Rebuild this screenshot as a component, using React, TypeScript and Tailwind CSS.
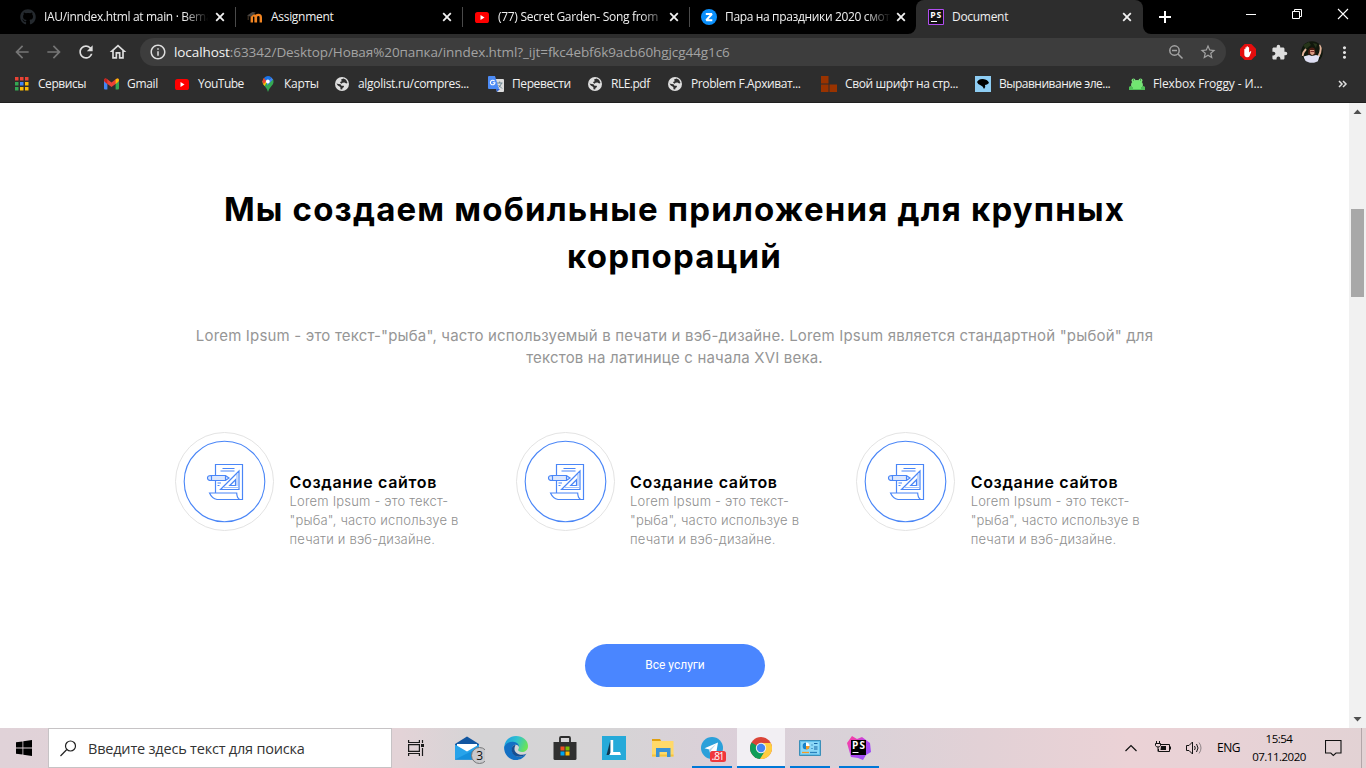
import React from "react";
import type { ReactNode } from "react";
import {
  MdArrowBack,
  MdArrowForward,
  MdRefresh,
  MdOutlineHome,
  MdExtension,
  MdMoreVert,
  MdStarBorder,
  MdInfoOutline,
} from "react-icons/md";
import { FaGithub } from "react-icons/fa";

const YouTubeIcon = () => (
  <svg width="16" height="16" viewBox="0 0 16 16">
    <rect x="1" y="3" width="14" height="11" rx="2.6" fill="#f00" />
    <path d="M6.5 6v5l4-2.5z" fill="#fff" />
  </svg>
);

const MoodleIcon = () => (
  <svg width="16" height="16" viewBox="0 0 16 16" fill="none">
    <path d="M4.8 13.5V8.3a1.9 1.9 0 0 1 3.8 0v5.2M8.9 13.5V8.3a2.1 2.1 0 0 1 4.9 0v5.2" stroke="#f28522" strokeWidth="2.4" />
    <path d="M0 6.5 5.5 3l3.2.6L4 7.8z" fill="#4b4641" />
    <path d="M1.2 7v4" stroke="#5d4a35" strokeWidth=".8" />
  </svg>
);

const ZenIcon = () => (
  <svg width="16" height="16" viewBox="0 0 16 16">
    <circle cx="8" cy="8" r="8" fill="#0a8ffb" />
    <path d="M4.8 5h6.1l-5.6 6.2h6" fill="none" stroke="#fff" strokeWidth="2" strokeLinejoin="bevel" />
  </svg>
);

const PhpStormTab = () => (
  <svg width="16" height="16" viewBox="0 0 16 16">
    <path d="M.5.5h15v15H.5z" fill="#111" stroke="#b14df0" />
    <text x="2.2" y="9" fontSize="8.6" fontWeight="700" fill="#fff" fontFamily="Open Sans" textLength="11">PS</text>
    <path d="M3 12.500h6" stroke="#fff" />
  </svg>
);

const CloseIcon = () => (
  <svg width="14" height="14" viewBox="0 0 14 14" className="shrink-0">
    <path d="m3.2 3.2 7.6 7.6m0-7.6-7.6 7.6" stroke="#f2f2f2" strokeWidth="1.8" />
  </svg>
);

const tabs: { icon: ReactNode; title: string; cls: string }[] = [
  {
    icon: <FaGithub size={16} color="#24292e" />,
    title: "IAU/inndex.html at main · Bema",
    cls: "tracking-[-0.33px] [mask-image:linear-gradient(to_right,#000_84%,transparent_99%)]",
  },
  { icon: <MoodleIcon />, title: "Assignment", cls: "tracking-[-0.3px]" },
  {
    icon: <YouTubeIcon />,
    title: "(77) Secret Garden- Song from",
    cls: "tracking-[-0.3px] [mask-image:linear-gradient(to_right,#000_86%,transparent_102%)]",
  },
  {
    icon: <ZenIcon />,
    title: "Пара на праздники 2020 смот",
    cls: "tracking-[-0.35px] [mask-image:linear-gradient(to_right,#000_84%,transparent_100%)]",
  },
];

function TabStrip() {
  return (
    <div className="flex h-[34px] bg-black pl-2">
      {tabs.map((t, i) => (
        <div key={t.title} className="relative flex h-[34px] w-[227px] items-center pl-3">
          <span className="w-4 shrink-0">{t.icon}</span>
          <span className={"ml-2 w-[166px] shrink-0 text-xs whitespace-nowrap text-[#f0f0f0] " + t.cls}>{t.title}</span>
          <span className="ml-[3px]">
            <CloseIcon />
          </span>
          {i < 3 && <span className="absolute top-[7px] -right-px h-5 w-px bg-[#4a4a4a]" />}
        </div>
      ))}
      <div className="relative flex h-[34px] w-[227px] items-center rounded-t-lg bg-[#2d2d2d] pl-3">
        <svg className="absolute bottom-0 -left-2" width="8" height="8">
          <path d="M8 0v8H0a8 8 0 0 0 8-8" fill="#2d2d2d" />
        </svg>
        <svg className="absolute -right-2 bottom-0" width="8" height="8">
          <path d="M0 0v8h8a8 8 0 0 1-8-8" fill="#2d2d2d" />
        </svg>
        <PhpStormTab />
        <span className="ml-2 w-[164px] text-xs tracking-[-0.3px] text-[#f0f0f0]">Document</span>
        <span className="ml-1">
          <CloseIcon />
        </span>
      </div>
      <svg className="mt-[9px] ml-[14px]" width="16" height="16">
        <path d="M8 2v12M2 8h12" stroke="#fff" strokeWidth="2" />
      </svg>
      <div className="ml-auto flex gap-[34px] pt-2 pr-[17px]">
        <svg width="12" height="12">
          <path d="M1 6.5h10" stroke="#fff" />
        </svg>
        <svg width="12" height="12" fill="none" stroke="#fff">
          <path d="M1.5 3.5h7v7h-7zM3.5 3V1.500h7v7H9" />
        </svg>
        <svg width="12" height="12">
          <path d="m1 1 10 10M11 1 1 11" stroke="#fff" strokeWidth="1.1" />
        </svg>
      </div>
    </div>
  );
}

function Toolbar() {
  return (
    <div className="flex h-8 items-center bg-[#2d2d2d] pt-1 pl-3">
      <div className="flex gap-3 text-[20px]">
        <MdArrowBack color="#757575" />
        <MdArrowForward color="#757575" />
        <MdRefresh color="#dedede" />
        <MdOutlineHome color="#dedede" />
      </div>
      <div className="ml-3 flex h-7 w-[1086px] items-center rounded-full bg-[#3d3d3d] pr-[9px] pl-[9px]">
        <MdInfoOutline size={18} color="#dedede" />
        <span className="ml-[7px] text-[13.5px] tracking-[-0.08px] whitespace-nowrap text-[#a3a3a3]">
          <span className="text-[#f3f3f3]">localhost</span>
          :63342/Desktop/Новая%20папка/inndex.html?_ijt=fkc4ebf6k9acb60hgjcg44g1c6
        </span>
        <span className="ml-auto flex items-center gap-[15px] text-[#a3a3a3]">
          <svg width="16" height="16" fill="none" stroke="#a3a3a3" strokeWidth="1.500">
            <circle cx="6.500" cy="6.500" r="4.700" />
            <path d="m10 10 4.500 4.500M4 6.500h5" />
          </svg>
          <MdStarBorder size={18} />
        </span>
      </div>
      <div className="ml-[14px] flex items-center">
        <svg width="16" height="16" viewBox="0 0 16 16">
          <path d="M4.700 0h6.600L16 4.700v6.600L11.300 16H4.700L0 11.300V4.700z" fill="#e40d0d" />
          <path d="M4.300 8.500V5.200q.6-.7 1.100 0V3.500q.6-.7 1.200 0V2.600q.7-.7 1.300 0v.8q.6-.7 1.200 0v5l1.200-1.200q.9-.2 1 .4l-1.700 4.300q-.6 1.400-2.300 1.400H7q-2.700-.3-2.700-3z" fill="#fff" />
        </svg>
        <MdExtension size={17} color="#dedede" className="ml-[15px]" />
        <svg width="22" height="22" viewBox="0 0 22 22" className="ml-[13px]">
          <defs>
            <clipPath id="avatar">
              <circle cx="11" cy="11" r="10.800" />
            </clipPath>
          </defs>
          <g clipPath="url(#avatar)">
            <path d="M0 0h22v22H0z" fill="#10170c" />
            <path d="M2 4l6-3 2 3-5 4zM12 2l4 1-1 4z" fill="#26351a" />
            <path d="M1.500 15q.5-4 3.500-7M17.500 15.500q3.500-6 1.500-12" stroke="#e0b29a" strokeWidth="2" fill="none" />
            <path d="M7.500 9q1-3 4-2.500 3 .5 2.500 4l1 3H7z" fill="#4a1d12" />
            <path d="M9 9h4.200l.3 3.500-2.300 2-2-2z" fill="#d99b83" />
            <path d="M9.500 10.500h3.500" stroke="#802c2b" />
            <path d="M2.500 15.500 8 14l3 1 4-1 3.500 1-2 7H5z" fill="#dfdff3" />
          </g>
        </svg>
        <MdMoreVert size={19} color="#e2e2e2" className="ml-3" />
      </div>
    </div>
  );
}

const AppsIcon = () => (
  <svg width="14" height="14">
    {["#ea4335", "#ea4335", "#ea4335", "#34a853", "#4285f4", "#fbbc05", "#34a853", "#fbbc05", "#fbbc05"].map((c, i) => (
      <rect key={i} x={(i % 3) * 5} y={Math.floor(i / 3) * 5} width="3.500" height="3.500" fill={c} />
    ))}
  </svg>
);

const GmailIcon = () => (
  <svg width="15" height="16" viewBox="0 0 15 16">
    <path d="M0 4h3.400v9.500H1q-1 0-1-1z" fill="#4285f4" />
    <path d="M11.600 4H15v8.500q0 1-1 1h-2.400z" fill="#34a853" />
    <path d="M0 4q.8-2.300 3-1l4.500 3.500L12 3q2.200-1.300 3 1l-.5 1.800-7 5.200-7-5.200z" fill="#ea4335" />
    <path d="M0 4q0 1.500 3.400 4V3.400Q.8 1.500 0 4" fill="#c5221f" />
    <path d="M15 4q0 1.500-3.400 4V3.400Q14.200 1.500 15 4" fill="#fbbc04" />
  </svg>
);

const MapsIcon = () => (
  <svg width="14" height="16" viewBox="0 0 14 16">
    <path d="M7 16Q6.400 13 3.600 10 1.400 8 1.500 5.500L12 3q1.600 4-1.500 7Q7.700 13 7 16" fill="#34a853" />
    <path d="M3.600 10Q1.500 8 1.500 5.500L3 2l3 3.500z" fill="#fbbc04" />
    <path d="M1.500 5.500Q1.500 3.500 3 2l3 2.500L2.500 8z" fill="#ea4335" />
    <path d="M3 2q3.500-3.500 7.500-.5L6 6z" fill="#1a73e8" />
    <path d="m10.500 1.500 1.500 2-6 6V6z" fill="#4285f4" />
    <circle cx="6.800" cy="5.500" r="1.900" fill="#fff" />
  </svg>
);

const TranslateIcon = () => (
  <svg width="16" height="16" viewBox="0 0 16 16">
    <path d="M6 3h9q1 0 1 1v11q0 1-1 1H9z" fill="#dcdcdc" />
    <path d="M9 7h5.500M11.700 5.500V7M13.500 7q-.7 3-3 4.500M10.500 9l3.500 3.500" stroke="#607d8b" strokeWidth=".9" fill="none" />
    <path d="M8 13h4l-3 3z" fill="#3367d6" />
    <path d="M1 0h6l4 13H1q-1 0-1-1V1q0-1 1-1" fill="#4c8bf5" />
    <path d="M6.600 5.200A2.300 2.300 0 1 0 7 6.700H4.800" stroke="#fff" strokeWidth="1.100" fill="none" />
  </svg>
);

const BlocksIcon = () => (
  <svg width="16" height="16" fill="#993300">
    <path d="M0 0h7.500v7.500H0zM0 8.500h7.500V16H0zM8.500 8.500H16V16H8.500z" />
  </svg>
);

const BirdIcon = () => (
  <svg width="16" height="16">
    <path d="M0 0h16v16H0z" fill="#8ecdf3" />
    <path d="M2 6q2-3.500 6-3 5 .5 6 4-2 2-4 2 1 2-1 4-1-3-3-3.500Q3 9 2 6" fill="#000" />
  </svg>
);

const FrogIcon = () => (
  <svg width="16" height="16">
    <ellipse cx="8" cy="9" rx="6" ry="5" fill="#7be07b" />
    <circle cx="4.500" cy="4.500" r="2" fill="#7be07b" />
    <circle cx="11.500" cy="4.500" r="2" fill="#7be07b" />
    <path d="M0 11q2-2 3 0h10q1-2 3 0v3H0z" fill="#4fc257" />
    <path d="M4 5h8v8H4z" fill="#71e771" />
    <path d="M4 4h1M11 4h1" stroke="#28622d" />
  </svg>
);

const Globe = () => (
  <svg width="14" height="14" viewBox="0 0 14 14">
    <circle cx="7" cy="7" r="7" fill="#dedede" />
    <path d="M1.500 6.500 3.500 7l2 .200 1 1.500h2.200l.3 1.200-1.500 1-.3 1.600-1.700-.3-.2-2.200-2.500-1.600z" fill="#2d2d2d" />
    <path d="M6 2.500 8.500 1.500l2.500 1.300L12.500 6l-1.300.5-1.700-1-2 .3-.8 1L5 5.800l.8-1.300 1-.3z" fill="#2d2d2d" />
  </svg>
);

const bookmarks: { icon: ReactNode; label: string; cls: string; text: string }[] = [
  { icon: <AppsIcon />, label: "Сервисы", cls: "w-[89px]", text: "tracking-[-0.45px]" },
  { icon: <GmailIcon />, label: "Gmail", cls: "w-[71px]", text: "tracking-[-0.3px]" },
  { icon: <YouTubeIcon />, label: "YouTube", cls: "w-[86px]", text: "tracking-[-0.5px]" },
  { icon: <MapsIcon />, label: "Карты", cls: "w-[74px]", text: "tracking-[-0.3px]" },
  { icon: <Globe />, label: "algolist.ru/compres...", cls: "w-[154px]", text: "tracking-[-0.3px]" },
  { icon: <TranslateIcon />, label: "Перевести", cls: "w-[99px]", text: "tracking-[-0.4px]" },
  { icon: <Globe />, label: "RLE.pdf", cls: "w-[80px]", text: "tracking-[-0.5px]" },
  { icon: <Globe />, label: "Problem F.Архиват...", cls: "w-[154px]", text: "tracking-[-0.4px]" },
  { icon: <BlocksIcon />, label: "Свой шрифт на стр...", cls: "w-[154px]", text: "tracking-[-0.4px]" },
  { icon: <BirdIcon />, label: "Выравнивание эле...", cls: "w-[154px]", text: "tracking-[-0.5px]" },
  { icon: <FrogIcon />, label: "Flexbox Froggy - И...", cls: "w-[150px]", text: "tracking-[-0.13px]" },
];

function BookmarksBar() {
  return (
    <div className="flex h-[37px] items-center border-b border-[#1f1f1f] bg-[#2d2d2d] pl-[14px]">
      {bookmarks.map((b) => (
        <div key={b.label} className={"flex shrink-0 items-center " + b.cls}>
          <span className="flex w-4 justify-center">{b.icon}</span>
          <span className={"ml-2 text-xs whitespace-nowrap text-[#f0f0f0] " + b.text}>{b.label}</span>
        </div>
      ))}
      <svg width="10" height="10" className="mr-[18px] ml-auto">
        <path d="m1 2 3 3-3 3M5 2l3 3-3 3" stroke="#dedede" strokeWidth="1.500" fill="none" />
      </svg>
    </div>
  );
}

const ServiceIcon = () => (
  <svg width="99" height="99" viewBox="175 432 99 99" fill="none" stroke="#4a86f7">
    <circle cx="224.500" cy="481.500" r="49" stroke="#e3e3e3" />
    <circle cx="224.500" cy="481.500" r="40.300" strokeWidth="1.100" />
    <g strokeWidth="1.200">
      <path d="M215.500 475v-10.500h27v35h-25.500q-5-1-7.500-6.500h27.200q.2 5 2.800 6.300" />
      <path d="M215.500 481v12" />
      <path d="M222.500 468.500h12M220.500 471h14" />
      <path d="M211 475.500h14.500l3.500 2.500-3.500 2.500H211q-3.500 0-3.500-2.500t3.500-2.500zM211.500 475.500v5M225.500 475.500v5" fill="#dbe7fe" />
      <path d="M239 471v18.500h-18.500zM235.500 479.800v5.700h-5.700z" />
      <path d="M237 474.500v12M224.500 487.500h13" strokeDasharray="1 1" />
      <path d="M217.500 483h3.500M217.500 485.500h2" />
    </g>
  </svg>
);

function Service() {
  return (
    <div className="flex w-[340.600px] pl-[11.500px]">
      <ServiceIcon />
      <div className="ml-[15.500px] pt-[41px]">
        <h3 className="text-base leading-[19px] font-semibold tracking-[0.68px] whitespace-nowrap text-black">Создание сайтов</h3>
        <p className="text-[13px] leading-[19px] font-light tracking-[0.19px] whitespace-nowrap text-[#8f8f8f]">
          Lorem Ipsum - это текст-
          <br />
          "рыба", часто используе в
          <br />
          печати и вэб-дизайне.
        </p>
      </div>
    </div>
  );
}

function Page() {
  return (
    <div className="flex h-[625px] bg-white">
      <main className="flex w-[1349px] flex-col items-center pt-[83px] font-['Inter',sans-serif]">
        <h1 className="text-center text-[33px] leading-[47px] font-bold tracking-[1.18px] whitespace-nowrap text-black">
          Мы создаем мобильные приложения для крупных
          <br />
          корпораций
        </h1>
        <p className="mt-[45px] text-center text-[15px] leading-[22px] tracking-[0.175px] whitespace-nowrap text-[#969696]">
          Lorem Ipsum - это текст-"рыба", часто используемый в печати и вэб-дизайне. Lorem Ipsum является стандартной "рыбой" для
          <br />
          текстов на латинице с начала XVI века.
        </p>
        <section className="mt-[63px] flex h-[120px] w-[1022px]">
          <Service />
          <Service />
          <Service />
        </section>
        <button className="mt-[92px] ml-px h-[43px] w-[180px] rounded-full bg-[#4a86ff] pb-px font-['Roboto',sans-serif] text-xs text-white">
          Все услуги
        </button>
      </main>
      <div className="flex w-[17px] flex-col items-center bg-[#f1f1f1] py-[6px]">
        <svg width="9" height="6">
          <path d="M.5 5h8l-4-4.500z" fill="#505050" />
        </svg>
        <div className="mt-[94px] h-[88px] w-[13px] bg-[#a8a8a8]" />
        <svg width="9" height="6" className="mt-auto">
          <path d="M.5 1h8l-4 4.500z" fill="#505050" />
        </svg>
      </div>
    </div>
  );
}

const MailIcon = () => (
  <svg width="36" height="32" viewBox="449 732 36 32">
    <path d="M455 744l12-7.500 12 7.500v15.500h-24z" fill="#1256a0" />
    <path d="M457 744h20v8h-20z" fill="#fff" />
    <path d="M455 744.500l12 7 12-7v15h-24z" fill="#27a3ea" />
    <path d="M455 759.500l24-12v12z" fill="#1590dd" />
    <circle cx="479.500" cy="755.500" r="8" fill="#c9c9cc" stroke="#77787a" />
    <text x="476.300" y="760" fontSize="12" fill="#111" fontFamily="Open Sans">3</text>
  </svg>
);

const EdgeIcon = () => (
  <svg width="24" height="24" viewBox="0 0 24 24">
    <defs>
      <linearGradient id="eg" x1="0" x2="1" y1=".2" y2=".5">
        <stop offset="0" stopColor="#1b9de2" />
        <stop offset=".5" stopColor="#2fc2cf" />
        <stop offset="1" stopColor="#6be455" />
      </linearGradient>
    </defs>
    <path d="M.3 10.500C1 4 6 0 12 0c7 0 12 4.500 12 10 0 4-3 6-6 6-3.500 0-4.500-1.500-3.500-3 1.500-3-1-5-4-5-5 0-8 3-8 7Q-.200 14 .3 10.500" fill="url(#eg)" />
    <path d="M.3 11C1.500 7.500 5.500 5.500 9 5.800c3.500.2 6 2.200 6 5-1-2.300-4-3-6-.8-2 2.500-1 6 1 8.500 3.500 3.500 9 2.500 12.500-1C20 22 16 24 12 24 5 24-.5 18 .3 11" fill="#1370c4" />
    <path d="M9 10c-2 2-1.500 6 .5 8.500 3.500 3.500 9 2.500 12.800-.8-3 1.800-8 1.300-10.300-1.200C10 14.500 10 12 11.500 9Q10 8.800 9 10" fill="#174f92" />
  </svg>
);

const StoreIcon = () => (
  <svg width="24" height="24" viewBox="0 0 24 24">
    <path d="M7 6V2q0-1 1-1h8q1 0 1 1v4" stroke="#2b2b2b" strokeWidth="1.800" fill="none" />
    <path d="M.5 6h23v16.500q0 1.500-1.500 1.500H2Q.5 24 .5 22.500z" fill="#303030" />
    <path d="M7.500 10.500h4v4h-4z" fill="#f25022" />
    <path d="M12.500 10.500h4v4h-4z" fill="#7fba00" />
    <path d="M7.500 15.500h4v4h-4z" fill="#00a4ef" />
    <path d="M12.500 15.500h4v4h-4z" fill="#ffb900" />
  </svg>
);

const LIcon = () => (
  <svg width="24" height="24" viewBox="0 0 24 24">
    <path d="M0 0h24v24H0z" fill="#25aad9" />
    <path d="M4.500 19 8.500 4v12.500L7 19z" fill="#123850" />
    <path d="M8.500 4h2.700v12H18l1 3H7.500l1-2.500z" fill="#fff" />
  </svg>
);

const FolderIcon = () => (
  <svg width="24" height="24" viewBox="0 0 24 24">
    <path d="M1 3h8l1.500 2.500H1z" fill="#e0a010" />
    <path d="M1 5h21.500v15.500H1z" fill="#ffd969" />
    <path d="M1 18.500h21.500v2H1z" fill="#f5c33d" />
    <path d="M5 12h14.500v9H16v-5H8.500v5H5z" fill="#3a92d4" />
  </svg>
);

const TelegramIcon = () => (
  <svg width="30" height="30" viewBox="697 733 30 30">
    <circle cx="712" cy="748" r="11" fill="#2ba0da" />
    <path d="M704.500 748.200 718 742.500l-2 11.500-4-3-2 2-.8-3.500z" fill="#fff" />
    <path d="m709.200 749.500 7-5.500-5 6-.8 2.500z" fill="#b7d6e8" />
    <rect x="710" y="751" width="16" height="11" rx="2.500" fill="#f0373c" />
    <text x="711.500" y="760.200" fontSize="10" fill="#fff" fontFamily="Open Sans" textLength="13">..81</text>
  </svg>
);

const ChromeIcon = () => (
  <svg width="22" height="22" viewBox="0 0 22 22">
    <circle cx="11" cy="11" r="11" fill="#db4437" />
    <path d="M11 11 1.500 5.500A11 11 0 0 0 10 22l6-8z" fill="#0f9d58" />
    <path d="M11 6h9.800A11 11 0 0 1 10 22l5.500-9z" fill="#ffcd40" />
    <circle cx="11" cy="11" r="5.200" fill="#f1f1f1" />
    <circle cx="11" cy="11" r="4.200" fill="#4285f4" />
  </svg>
);

const PanelIcon = () => (
  <svg width="22" height="16" viewBox="0 0 22 16">
    <path d="M.5.5h21v15H.5z" fill="#62c0ec" stroke="#3b8fb9" />
    <path d="M2 2h18v12H2z" fill="#8bd8f7" />
    <circle cx="7" cy="6" r="3.500" fill="#fff" />
    <path d="M7 6V2.500A3.500 3.500 0 1 0 10.500 6z" fill="#1683c9" />
    <path d="M7 6h3.500A3.500 3.500 0 0 1 7 9.500z" fill="#f59b24" />
    <path d="M12.500 5h1M15 3.500h3.500M12.500 8.500h1M15 7h3.500M15 9h3.500" stroke="#1565a5" strokeWidth="1.200" />
    <path d="M3 12.500h7" stroke="#f59b24" strokeWidth="1.300" />
    <path d="M11 12.500h7" stroke="#2a82bd" strokeWidth="1.300" />
  </svg>
);

const PhpStormIcon = () => (
  <svg width="24" height="24" viewBox="0 0 24 24">
    <defs>
      <linearGradient id="ps" x1="0" x2="1" y1="0" y2="1">
        <stop offset=".2" stopColor="#f03fae" />
        <stop offset=".5" stopColor="#b345f1" />
        <stop offset="1" stopColor="#8f55f5" />
      </linearGradient>
    </defs>
    <path d="M0 7 5 0l5 3 5-2 8 6 1 9-5 3-3 5-5-2-7-1z" fill="url(#ps)" />
    <path d="M4 4h15v15H4z" fill="#000" />
    <text x="5" y="12.500" fontSize="10" fontWeight="700" fill="#fff" fontFamily="Open Sans" textLength="13">PS</text>
    <path d="M5.500 16.500h6" stroke="#fff" />
  </svg>
);

const apps: { icon: ReactNode; cls: string; line?: string }[] = [
  { icon: <MailIcon />, cls: "" },
  { icon: <EdgeIcon />, cls: "" },
  { icon: <StoreIcon />, cls: "" },
  { icon: <LIcon />, cls: "" },
  { icon: <FolderIcon />, cls: "" },
  { icon: <TelegramIcon />, cls: "", line: "w-10" },
  { icon: <ChromeIcon />, cls: "bg-[#f2eff3]", line: "w-12" },
  { icon: <PanelIcon />, cls: "", line: "w-10" },
  { icon: <PhpStormIcon />, cls: "", line: "w-10" },
];

function Taskbar() {
  return (
    <div className="flex h-10 items-center bg-[linear-gradient(90deg,#e0d2d8_0px,#e3d3d7_400px,#d5d4d6_480px,#d6d4d6_620px,#dccfd9_740px,#d9d2d8_850px,#e2d1d6_980px,#ebd2d6_1130px,#e8d2d6_1220px,#e2d2d4_1366px)] text-black">
      <svg width="16" height="16" className="ml-4">
        <path d="M0 2.300 6.500 1.400v6.100H0zM7.300 1.300 16 0v7.500H7.300zM0 8.400h6.500v6.200L0 13.700zM7.300 8.400H16V16l-8.700-1.300z" />
      </svg>
      <div className="ml-4 flex h-10 w-[344px] items-center border border-[#c6c3c5] bg-white pl-[11px]">
        <svg width="16" height="17" fill="none" stroke="#222" strokeWidth="1.200">
          <circle cx="10.500" cy="6" r="5" />
          <path d="M6.800 9.500.5 16" />
        </svg>
        <span className="ml-3 pt-px text-[14.500px] tracking-[-0.2px] whitespace-nowrap text-[#333]">Введите здесь текст для поиска</span>
      </div>
      <svg width="17" height="16" fill="none" stroke="#1a1a1a" strokeWidth="1.200" className="ml-4">
        <path d="M.6 0v2.500h10.800V0M.6 16v-2.500h10.800V16M.6 4.600h10.800v6.800H.6zM14.500 0v3M14.500 8v8" />
        <path d="M13 4h3v3h-3z" fill="#1a1a1a" stroke="none" />
      </svg>
      <div className="ml-[18px] flex h-10 gap-px">
        {apps.map((a, i) => (
          <div key={i} className={"relative flex h-10 w-12 items-center justify-center " + a.cls}>
            {a.icon}
            {a.line && <span className={"absolute bottom-0 h-[2px] bg-[#0078d7] " + a.line} />}
          </div>
        ))}
      </div>
      <svg width="12" height="8" fill="none" stroke="#111" strokeWidth="1.200" className="ml-[242px]">
        <path d="m.5 7 5.500-5.500L11.500 7" />
      </svg>
      <svg width="16" height="14" fill="none" stroke="#111" className="ml-[18px]">
        <path d="M6 3.500h8.500v7H3.500V8M1.500 0v2.500M4.500 0v2.500M.5 2.500h5v2q-.5 1.500-2.500 1.500T.5 4.500zM3 6v4.500" />
        <path d="M6 5h5v4H5.500z" fill="#111" stroke="none" />
        <path d="M15.500 5.500v3" />
      </svg>
      <svg width="17" height="14" fill="none" stroke="#111" className="ml-[15px]">
        <path d="M.5 4.500h2.500L6.500 1v12L3 9.500H.5zM8.500 5q1.500 2 0 4M10.500 3q3 4 0 8" />
        <path d="M13 1.500q4 5.500 0 11" stroke="#8d8386" />
      </svg>
      <span className="ml-[14px] w-[24px] text-xs tracking-[-0.5px]">ENG</span>
      <div className="ml-[9px] flex w-[58px] flex-col items-center text-[11.500px] leading-[18px] tracking-[-0.5px]">
        <span>15:54</span>
        <span>07.11.2020</span>
      </div>
      <svg width="17" height="17" fill="none" stroke="#111" strokeWidth="1.100" className="ml-[17px]">
        <path d="M.5.5h15.500v12.500h-5L8.300 15.500 5.800 13H.5z" />
      </svg>
      <span className="ml-auto mr-1 h-10 w-px bg-[#b3a6a9]" />
    </div>
  );
}

export default function App() {
  return (
    <div className="h-[768px] w-[1366px] overflow-hidden bg-white font-['Open_Sans','Noto_Sans',sans-serif]">
      <TabStrip />
      <Toolbar />
      <BookmarksBar />
      <Page />
      <Taskbar />
    </div>
  );
}
